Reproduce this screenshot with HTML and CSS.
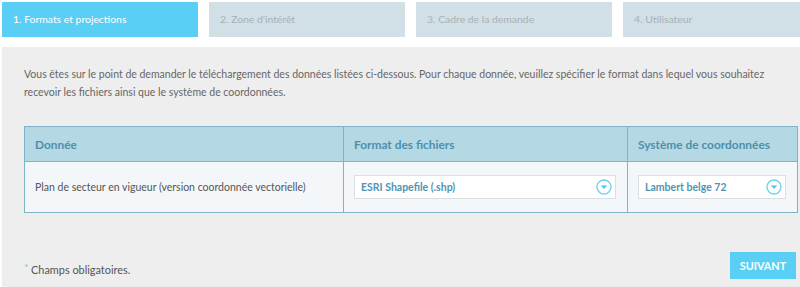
FILE: index.html
```html
<!DOCTYPE html>
<html lang="fr">
<head>
<meta charset="utf-8">
<link rel="stylesheet" href="styles.css">
</head>
<body>
<div class="page">
  <nav class="steps">
    <div class="step active">1. Formats et projections</div>
    <div class="step">2. Zone d'intérêt</div>
    <div class="step">3. Cadre de la demande</div>
    <div class="step last">4. Utilisateur</div>
  </nav>
  <main class="panel">
    <p class="intro">Vous êtes sur le point de demander le téléchargement des données listées ci-dessous. Pour chaque donnée, veuillez spécifier le format dans lequel vous souhaitez recevoir les fichiers ainsi que le système de coordonnées.</p>
    <table class="data">
      <colgroup>
        <col class="c1">
        <col class="c2">
        <col class="c3">
      </colgroup>
      <thead>
        <tr>
          <th>Donnée</th>
          <th>Format des fichiers</th>
          <th>Système de coordonnées</th>
        </tr>
      </thead>
      <tbody>
        <tr>
          <td>Plan de secteur en vigueur (version coordonnée vectorielle)</td>
          <td>
            <div class="select wide"><span>ESRI Shapefile (.shp)</span>
              <svg class="chev" width="16" height="16" viewBox="0 0 16 16"><circle cx="8" cy="8" r="7" fill="#fff" stroke="#6fd3f2" stroke-width="1.4"/><path d="M4.8 6.6 L11.2 6.6 L8 10 Z" fill="#4cc6ee"/></svg>
            </div>
          </td>
          <td>
            <div class="select narrow"><span>Lambert belge 72</span>
              <svg class="chev" width="16" height="16" viewBox="0 0 16 16"><circle cx="8" cy="8" r="7" fill="#fff" stroke="#6fd3f2" stroke-width="1.4"/><path d="M4.8 6.6 L11.2 6.6 L8 10 Z" fill="#4cc6ee"/></svg>
            </div>
          </td>
        </tr>
      </tbody>
    </table>
    <div class="footer">
      <p class="required"><span class="star">*</span> Champs obligatoires.</p>
      <button class="next">SUIVANT</button>
    </div>
  </main>
</div>
</body>
</html>
```

FILE: styles.css
```css
html, body {
  margin: 0;
  padding: 0;
  background: #fff;
  overflow: hidden;
}
body {
  font-family: Lato, "Open Sans", sans-serif;
  font-size: 10.5px;
  color: #666;
}
.page {
  width: 800px;
  height: 287px;
  padding: 2px 0 0 2px;
  box-sizing: border-box;
  display: flex;
  flex-direction: column;
}
.steps {
  display: flex;
  gap: 11px;
  height: 35px;
}
.step {
  flex: 0 0 196px;
  background: #d1dfe6;
  color: #a9b1b5;
  line-height: 35px;
  padding-left: 11px;
  box-sizing: border-box;
  white-space: nowrap;
  overflow: hidden;
  font-size: 10.4px;
}
.step.last {
  flex: 1 1 0;
  min-width: 0;
}
.step.active {
  background: #59cff5;
  color: #fff;
}
.panel {
  margin-top: 10px;
  flex: 1;
  background: #eeeeee;
  padding: 18px 0 0 22px;
}
.intro {
  margin: 0;
  width: 760px;
  line-height: 18px;
  color: #666;
}
.data {
  margin-top: 25px;
  border-collapse: collapse;
  width: 773px;
  table-layout: fixed;
}
col.c1 { width: 319px; }
col.c2 { width: 284px; }
col.c3 { width: 170px; }
.data th, .data td {
  border: 1px solid #7fb3c8;
  text-align: left;
  padding: 0 10px;
}
.data th {
  background: #b4d9e5;
  color: #4d8fab;
  font-weight: bold;
  font-size: 11.9px;
  height: 34px;
  white-space: nowrap;
}
.data td {
  background: #f4f7f9;
  height: 50px;
  color: #555;
}
.select {
  display: flex;
  align-items: center;
  justify-content: space-between;
  height: 24px;
  background: #fff;
  border: 1px solid #d9dfe2;
  padding: 0 3px 0 6px;
  color: #4f94b4;
  font-weight: bold;
  box-sizing: border-box;
}
.select.wide { width: 262px; }
.select.narrow { width: 148px; }
.chev { flex: none; }
.footer {
  display: flex;
  justify-content: space-between;
  align-items: flex-end;
  margin-top: 39px;
  width: 772px;
}
.required {
  margin: 0 0 3px 0;
  color: #555;
  font-size: 10.9px;
}
.star {
  color: #59cff5;
  font-size: 10px;
  vertical-align: 3px;
}
.next {
  background: #59cff5;
  color: #fff;
  border: none;
  font-family: Lato, sans-serif;
  font-weight: bold;
  font-size: 10.8px;
  width: 66px;
  height: 27px;
  padding: 0;
}
```
